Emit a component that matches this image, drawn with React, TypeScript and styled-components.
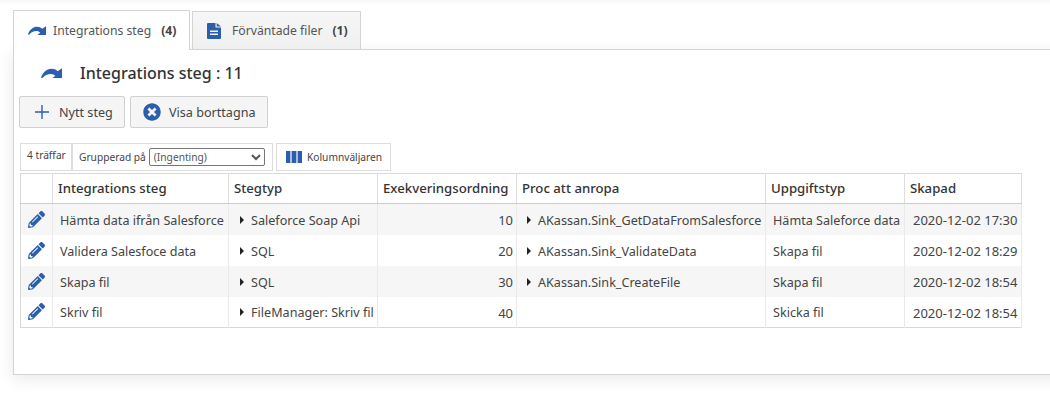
import React, { FC } from 'react';
import { FaPencilAlt, FaTimesCircle } from 'react-icons/fa';
import styled, { createGlobalStyle } from 'styled-components';

const blue = '#2b5fae';

const GlobalStyle = createGlobalStyle`
  html, body {
    margin: 0;
    height: 419px;
    overflow: hidden;
    background: #fff;
  }
  body {
    font-family: "Noto Sans", "Open Sans", sans-serif;
    font-size: 12px;
    color: #333;
  }
`;

const Page = styled.div`
  height: 419px;
  box-sizing: border-box;
  padding: 10px 0 0 13px;
  background: linear-gradient(#f7f7f7 0, #fff 5px);
`;

const TabBar = styled.div`
  display: flex;
  align-items: flex-end;
  gap: 2px;
  height: 40px;
  position: relative;
  z-index: 1;
`;

const Tab = styled.div<{ $active?: boolean }>`
  box-sizing: border-box;
  display: flex;
  align-items: center;
  height: ${(p) => (p.$active ? '40px' : '39px')};
  width: ${(p) => (p.$active ? '177px' : '169px')};
  padding-left: 14px;
  border: 1px solid #d4d4d4;
  border-bottom: ${(p) => (p.$active ? 'none' : '1px solid #d4d4d4')};
  background: ${(p) => (p.$active ? '#fff' : 'linear-gradient(#f6f6f6, #f0f0f0)')};
  color: #555;
  font-size: 12.2px;
`;

const TabLabel = styled.span<{ $gap: number }>`
  margin-left: ${(p) => p.$gap}px;
  white-space: nowrap;
`;

const TabCount = styled.b`
  margin-left: 10px;
  font-weight: 700;
  color: #444;
`;

const Panel = styled.div`
  box-sizing: border-box;
  width: 1060px;
  height: 326px;
  margin-top: -1px;
  padding: 0 0 0 5px;
  border: 1px solid #d4d4d4;
  box-shadow: 0 4px 16px rgba(0, 0, 0, 0.09);
`;

const TitleRow = styled.div`
  display: flex;
  align-items: center;
  height: 46px;
  padding-left: 22px;
`;

const Title = styled.h1`
  margin: 0 0 0 18px;
  font-size: 16px;
  font-weight: 500;
  color: #333;
`;

const ActionRow = styled.div`
  display: flex;
  gap: 5px;
`;

const ActionButton = styled.button<{ $width: number; $pad: number }>`
  box-sizing: border-box;
  display: flex;
  align-items: center;
  width: ${(p) => p.$width}px;
  height: 32px;
  padding: 0 0 0 ${(p) => p.$pad}px;
  border: 1px solid #d0d0d0;
  border-radius: 2px;
  background: #f5f5f5;
  color: #444;
  font: inherit;
  font-size: 12.6px;
`;

const ButtonLabel = styled.span<{ $gap: number }>`
  margin-left: ${(p) => p.$gap}px;
  white-space: nowrap;
`;

const Toolbar = styled.div`
  display: flex;
  height: 28px;
  margin: 15px 0 2px 1px;
`;

const ToolBox = styled.div<{ $width: number; $gap?: number; $pad?: number }>`
  box-sizing: border-box;
  display: flex;
  align-items: center;
  width: ${(p) => p.$width}px;
  margin-right: ${(p) => p.$gap ?? 0}px;
  padding-left: ${(p) => p.$pad ?? 0}px;
  border: 1px solid #ddd;
  font-size: 10.2px;
  color: #444;
  white-space: nowrap;
`;

const HitCount = styled.span`
  padding: 0 0 4px 6px;
`;

const GroupLabel = styled.label`
  display: flex;
  align-items: center;
  padding-left: 6px;
`;

const GroupSelect = styled.select`
  box-sizing: border-box;
  width: 116px;
  height: 18px;
  margin-left: 3px;
  padding: 0;
  border: 1px solid #767676;
  border-radius: 2px;
  background: #fff;
  color: #555;
  font: inherit;
  font-size: 10.2px;
`;

const ChooserLabel = styled.span`
  margin-left: 5px;
`;

const Grid = styled.table`
  table-layout: fixed;
  width: 1001px;
  margin-left: 1px;
  border-collapse: collapse;
  border: 1px solid #d8d8d8;
`;

const HeadCell = styled.th`
  height: 30px;
  box-sizing: border-box;
  padding: 0 0 2px 5px;
  border-top: 1px solid #d8d8d8;
  border-right: 1px solid #ddd;
  border-bottom: 1px solid #bcd0e8;
  background: #fff;
  color: #333;
  font-size: 13.2px;
  font-weight: 500;
  text-align: left;
  white-space: nowrap;
  overflow: hidden;
`;

const Row = styled.tr`
  height: 31px;
  &:nth-child(odd) {
    background: #f6f6f6;
  }
`;

const Cell = styled.td<{ $right?: boolean; $indent?: number; $digits?: boolean }>`
  padding: 2px ${(p) => (p.$right ? '3px' : '0')} 0 ${(p) => p.$indent ?? 7}px;
  border-right: 1px solid #eaeaea;
  color: #444;
  font-size: ${(p) => (p.$digits ? '13px' : '12.6px')};
  text-align: ${(p) => (p.$right ? 'right' : 'left')};
  white-space: nowrap;
  overflow: hidden;
`;

const EditCell = styled.td`
  padding: 0;
  border-right: 1px solid #eaeaea;
  color: ${blue};
  text-align: center;
  line-height: 0;
`;

const Caret = styled.i`
  display: inline-block;
  width: 0;
  height: 0;
  margin-right: 7px;
  vertical-align: 1px;
  border-style: solid;
  border-width: 4px 0 4px 4px;
  border-color: transparent transparent transparent #222;
`;

const StepIcon: FC<{ size: number }> = ({ size }) => (
  <svg width={size} height={size * 0.5} viewBox="0 0 20 10" fill={blue}>
    <path d="M0 9.2C2 3.6 6 .8 10 .8c2.4 0 4.3.8 5.8 2.2L20 .2V10h-9.6l3.2-2.6C12.4 6.3 11 5.6 9.5 5.6 6 5.6 3 7 1.1 10L0 9.2z" />
  </svg>
);

const FileIcon: FC = () => (
  <svg width="14" height="16" viewBox="0 0 14 16" fill={blue}>
    <path d="M1 0h7.5v4.5H14V15a1 1 0 0 1-1 1H1a1 1 0 0 1-1-1V1a1 1 0 0 1 1-1zM9.7 0 14 3.4H9.7zM3 7.6v1.3h8V7.6zm0 3v1.3h8v-1.3z" fillRule="evenodd" />
  </svg>
);

const PlusIcon: FC = () => (
  <svg width="14" height="14" viewBox="0 0 14 14" fill={blue}>
    <path d="M6.3 0h1.4v6.3H14v1.4H7.7V14H6.3V7.7H0V6.3h6.3z" />
  </svg>
);

const ColumnsIcon: FC = () => (
  <svg width="16" height="12" viewBox="0 0 16 12" fill={blue}>
    <path d="M0 0h4.4v12H0zM5.6 0h4.8v12H5.6zM11.6 0H16v12h-4.4z" />
  </svg>
);

const columns = [32, 176, 149, 139, 249, 139, 117];
const heads = ['', 'Integrations steg', 'Stegtyp', 'Exekveringsordning', 'Proc att anropa', 'Uppgiftstyp', 'Skapad'];

const rows = [
  { name: 'Hämta data ifrån Salesforce', type: 'Saleforce Soap Api', order: 10, proc: 'AKassan.Sink_GetDataFromSalesforce', task: 'Hämta Saleforce data', created: '2020-12-02 17:30' },
  { name: 'Validera Salesfoce data', type: 'SQL', order: 20, proc: 'AKassan.Sink_ValidateData', task: 'Skapa fil', created: '2020-12-02 18:29' },
  { name: 'Skapa fil', type: 'SQL', order: 30, proc: 'AKassan.Sink_CreateFile', task: 'Skapa fil', created: '2020-12-02 18:54' },
  { name: 'Skriv fil', type: 'FileManager: Skriv fil', order: 40, proc: '', task: 'Skicka fil', created: '2020-12-02 18:54' },
];

const App: FC = () => (
  <Page>
    <GlobalStyle />
    <TabBar>
      <Tab $active>
        <StepIcon size={18} />
        <TabLabel $gap={7}>Integrations steg</TabLabel>
        <TabCount>(4)</TabCount>
      </Tab>
      <Tab>
        <FileIcon />
        <TabLabel $gap={11}>Förväntade filer</TabLabel>
        <TabCount>(1)</TabCount>
      </Tab>
    </TabBar>
    <Panel>
      <TitleRow>
        <StepIcon size={21} />
        <Title>Integrations steg : 11</Title>
      </TitleRow>
      <ActionRow>
        <ActionButton $width={106} $pad={15}>
          <PlusIcon />
          <ButtonLabel $gap={10}>Nytt steg</ButtonLabel>
        </ActionButton>
        <ActionButton $width={138} $pad={12}>
          <FaTimesCircle size={18} color={blue} />
          <ButtonLabel $gap={8}>Visa borttagna</ButtonLabel>
        </ActionButton>
      </ActionRow>
      <Toolbar>
        <ToolBox $width={52}>
          <HitCount>4 träffar</HitCount>
        </ToolBox>
        <ToolBox $width={201} $gap={3}>
          <GroupLabel>
            Grupperad på
            <GroupSelect defaultValue="none">
              <option value="none">(Ingenting)</option>
            </GroupSelect>
          </GroupLabel>
        </ToolBox>
        <ToolBox $width={115} $pad={9}>
          <ColumnsIcon />
          <ChooserLabel>Kolumnväljaren</ChooserLabel>
        </ToolBox>
      </Toolbar>
      <Grid>
        <colgroup>
          {columns.map((w, i) => (
            <col key={i} width={w} />
          ))}
        </colgroup>
        <thead>
          <tr>
            {heads.map((h, i) => (
              <HeadCell key={i}>{h}</HeadCell>
            ))}
          </tr>
        </thead>
        <tbody>
          {rows.map((r) => (
            <Row key={r.name}>
              <EditCell>
                <FaPencilAlt size={17} />
              </EditCell>
              <Cell>{r.name}</Cell>
              <Cell $indent={11}>
                <Caret />
                {r.type}
              </Cell>
              <Cell $right $digits>
                {r.order}
              </Cell>
              <Cell $indent={10}>
                {r.proc && <Caret />}
                {r.proc}
              </Cell>
              <Cell>{r.task}</Cell>
              <Cell $indent={8} $digits>
                {r.created}
              </Cell>
            </Row>
          ))}
        </tbody>
      </Grid>
    </Panel>
  </Page>
);

export default App;
